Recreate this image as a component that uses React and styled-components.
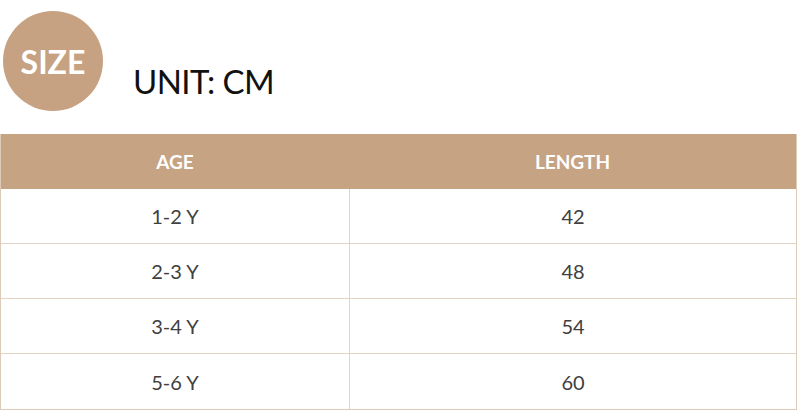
import React from "react";
import styled, { createGlobalStyle } from "styled-components";

const Global = createGlobalStyle`
  html, body { margin: 0; padding: 0; background: #fff; }
  body { font-family: Lato, "Open Sans", sans-serif; }
`;

const Page = styled.div`
  width: 800px;
  height: 414px;
  overflow: hidden;
  background: #fff;
`;

const Top = styled.div`
  display: flex;
  align-items: flex-start;
  padding: 11px 0 0 3px;
  height: 134px;
  box-sizing: border-box;
`;

const Badge = styled.div`
  width: 100px;
  height: 100px;
  border-radius: 50%;
  background: #c6a283;
  color: #fff;
  display: flex;
  align-items: center;
  justify-content: center;
  font-weight: 700;
  font-size: 32px;
`;

const Unit = styled.div`
  margin: 50px 0 0 30px;
  font-size: 33px;
  line-height: 40px;
  letter-spacing: -0.6px;
  color: #111;
  font-weight: 400;
`;

const Table = styled.div`
  width: 797px;
  display: grid;
  grid-template-columns: 348px 1fr;
  border: 1px solid #dccbb8;
  border-top: none;
  box-sizing: border-box;
`;

const Head = styled.div`
  background: #c6a383;
  color: #fff;
  font-weight: 700;
  font-size: 19px;
  height: 55px;
  display: flex;
  align-items: center;
  justify-content: center;
`;

const Cell = styled.div`
  height: 55px;
  box-sizing: border-box;
  display: flex;
  align-items: center;
  justify-content: center;
  font-size: 20px;
  color: #404040;
  border-bottom: ${(p) => (p.$last ? "none" : "1px solid #e2d3c3")};
  border-left: ${(p) => (p.$right ? "1px solid #e2d3c3" : "none")};
`;

const rows = [
  ["1-2 Y", "42"],
  ["2-3 Y", "48"],
  ["3-4 Y", "54"],
  ["5-6 Y", "60"],
];

export default function App() {
  return (
    <Page>
      <Global />
      <Top>
        <Badge>SIZE</Badge>
        <Unit>UNIT: CM</Unit>
      </Top>
      <Table>
        <Head>AGE</Head>
        <Head>LENGTH</Head>
        {rows.map(([a, l], i) => (
          <React.Fragment key={a}>
            <Cell $last={i === rows.length - 1}>{a}</Cell>
            <Cell $right $last={i === rows.length - 1}>{l}</Cell>
          </React.Fragment>
        ))}
      </Table>
    </Page>
  );
}
